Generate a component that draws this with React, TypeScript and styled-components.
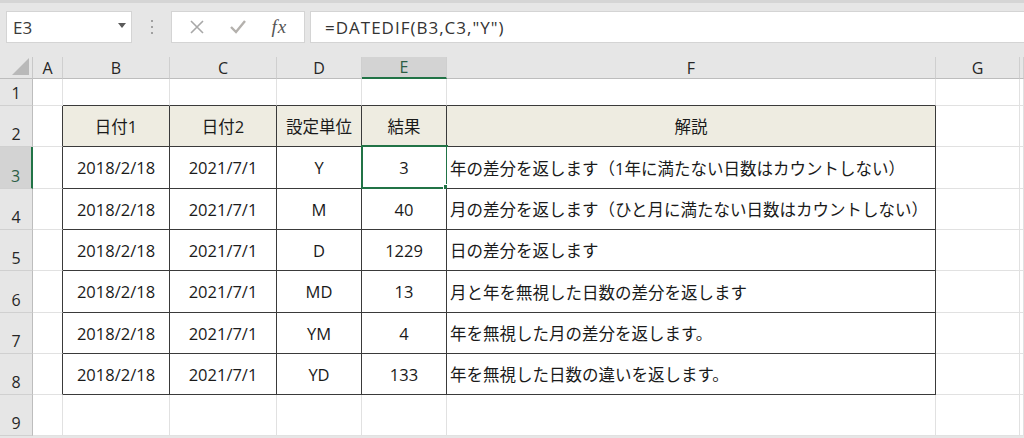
import React from 'react';
import {styled, createGlobalStyle} from "styled-components";

const GlobalStyle = createGlobalStyle`
    html, body {
        margin: 0;
        padding: 0;
        background-color: #e6e6e6;
    }
`;

const Window = styled.div`
    width: 1024px;
    height: 438px;
    overflow: hidden;
    background-color: #e6e6e6;
    font-family: "Open Sans", "Noto Sans CJK JP", sans-serif;
`;

const Toolbar = styled.div`
    height: 57px;
    box-sizing: border-box;
    border-top: 3px solid #d5d5d5;
    padding: 8px 0 0 6px;
    display: flex;
    align-items: flex-start;
`;

const NameBox = styled.div`
    width: 126px;
    height: 32px;
    box-sizing: border-box;
    background-color: #ffffff;
    border: 1px solid #d4d4d4;
    display: flex;
    align-items: center;
    justify-content: space-between;
    padding: 0 5px 0 6px;
    font-size: 17px;
    color: #3a3a3a;
`;

const Caret = styled.span`
    width: 0;
    height: 0;
    border-left: 4px solid transparent;
    border-right: 4px solid transparent;
    border-top: 5px solid #5a5a5a;
    margin-bottom: 3px;
`;

const Grip = styled.div`
    width: 39px;
    height: 32px;
    display: flex;
    flex-direction: column;
    align-items: center;
    justify-content: center;
    gap: 4px;
`;

const GripDot = styled.span`
    width: 2px;
    height: 2px;
    background-color: #a0a0a0;
`;

const FxBox = styled.div`
    width: 134px;
    height: 32px;
    box-sizing: border-box;
    background-color: #ffffff;
    border: 1px solid #d4d4d4;
    display: flex;
    align-items: center;
    justify-content: space-around;
    padding: 0 4px;
`;

const ToolIcon = styled.span`
    width: 30px;
    display: flex;
    justify-content: center;
    align-items: center;
`;

const FxText = styled.span`
    font-family: "Liberation Serif", serif;
    font-style: italic;
    font-size: 19px;
    color: #555555;
    letter-spacing: 1px;
`;

const FormulaBox = styled.div`
    flex: 1;
    height: 32px;
    margin-left: 5px;
    box-sizing: border-box;
    background-color: #ffffff;
    border: 1px solid #d4d4d4;
    border-right: none;
    display: flex;
    align-items: center;
    padding-left: 14px;
    font-size: 17px;
    letter-spacing: 1px;
    color: #333333;
`;

const Sheet = styled.div`
    display: grid;
    grid-template-columns: 33px 30px 107px 107px 85px 85px 489px 84px 4px;
    grid-template-rows: 22px 27px 41px 42px 41px 41px 42px 41px 41px 41px;
    background-color: #ffffff;
`;

const HeadBase = styled.div`
    box-sizing: border-box;
    background-color: #e6e6e6;
    display: flex;
    justify-content: center;
    font-family: "Open Sans", "Noto Sans", sans-serif;
    font-size: 16px;
`;

const Corner = styled(HeadBase)`
    position: relative;
    border-right: 1px solid #c8c8c8;
    border-bottom: 1px solid #bdbdbd;
`;

const CornerTriangle = styled.span`
    position: absolute;
    right: 3px;
    bottom: 3px;
    width: 0;
    height: 0;
    border-left: 17px solid transparent;
    border-bottom: 17px solid #b9b9b9;
`;

const ColHead = styled(HeadBase)<{ $active?: boolean }>`
    align-items: center;
    background-color: ${(p) => (p.$active ? "#d3d3d3" : "#e6e6e6")};
    color: ${(p) => (p.$active ? "#2c5e45" : "#262626")};
    border-right: 1px solid #cfcfcf;
    border-bottom: ${(p) => (p.$active ? "2px solid #217346" : "1px solid #bdbdbd")};
`;

const RowHead = styled(HeadBase)<{ $active?: boolean }>`
    align-items: flex-end;
    padding-bottom: 1px;
    background-color: ${(p) => (p.$active ? "#d3d3d3" : "#e6e6e6")};
    color: ${(p) => (p.$active ? "#2c5e45" : "#262626")};
    border-right: ${(p) => (p.$active ? "2px solid #217346" : "1px solid #bdbdbd")};
    border-bottom: 1px solid #d0d0d0;
`;

interface cellProps {
    $fill?: string
    $left?: boolean
    $darkRight?: boolean
    $darkBottom?: boolean
}

const Cell = styled.div<cellProps>`
    position: relative;
    box-sizing: border-box;
    display: flex;
    align-items: center;
    justify-content: ${(p) => (p.$left ? "flex-start" : "center")};
    padding-left: ${(p) => (p.$left ? "3px" : "0")};
    background-color: ${(p) => p.$fill || "#ffffff"};
    border-right: 1px solid ${(p) => (p.$darkRight ? "#3a3a3a" : "#e1e1e1")};
    border-bottom: 1px solid ${(p) => (p.$darkBottom ? "#3a3a3a" : "#e1e1e1")};
    font-size: 16.5px;
    color: #1a1a1a;
    white-space: nowrap;
`;

const Selection = styled.span`
    position: absolute;
    left: -1px;
    top: -2px;
    right: -2px;
    bottom: -1px;
    border: 2px solid #217346;
    pointer-events: none;

    &::after {
        content: "";
        position: absolute;
        right: -4px;
        bottom: -4px;
        width: 5px;
        height: 5px;
        background-color: #217346;
        border: 1px solid #ffffff;
    }
`;

const columns = ["A", "B", "C", "D", "E", "F", "G", ""];

const header = ["日付1", "日付2", "設定単位", "結果", "解説"];

const rows = [
    ["2018/2/18", "2021/7/1", "Y", "3", "年の差分を返します（1年に満たない日数はカウントしない）"],
    ["2018/2/18", "2021/7/1", "M", "40", "月の差分を返します（ひと月に満たない日数はカウントしない）"],
    ["2018/2/18", "2021/7/1", "D", "1229", "日の差分を返します"],
    ["2018/2/18", "2021/7/1", "MD", "13", "月と年を無視した日数の差分を返します"],
    ["2018/2/18", "2021/7/1", "YM", "4", "年を無視した月の差分を返します。"],
    ["2018/2/18", "2021/7/1", "YD", "133", "年を無視した日数の違いを返します。"],
];

const CrossIcon = () => (
    <svg width="16" height="16" viewBox="0 0 16 16">
        <path d="M2 2 L14 14 M14 2 L2 14" stroke="#a8a8a8" strokeWidth="1.6" fill="none"/>
    </svg>
);

const CheckIcon = () => (
    <svg width="18" height="16" viewBox="0 0 18 16">
        <path d="M2 8 L7 13 L16 2" stroke="#b4b1ad" strokeWidth="2.4" fill="none"/>
    </svg>
);

const App = () => {
    // table occupies B2:F8 (grid rows 2..8)
    const renderRow = (r: number) => {
        const cells: React.ReactNode[] = [];
        const inTable = r >= 2 && r <= 8;
        cells.push(<RowHead key={`h${r}`} $active={r === 3}>{r}</RowHead>);
        for (let c = 0; c < 8; c++) {
            const key = `${r}-${c}`;
            const tableCol = c >= 1 && c <= 5;
            if (inTable && tableCol) {
                const isHead = r === 2;
                const value = isHead ? header[c - 1] : rows[r - 3][c - 1];
                const isDesc = c === 5;
                cells.push(
                    <Cell key={key}
                          $fill={isHead ? "#eeece1" : undefined}
                          $left={isDesc && !isHead}
                          $darkRight
                          $darkBottom>
                        {value}
                        {r === 3 && c === 4 && <Selection/>}
                    </Cell>
                );
            } else {
                cells.push(
                    <Cell key={key}
                          $darkRight={c === 0 && inTable}
                          $darkBottom={r === 1 && tableCol}/>
                );
            }
        }
        return cells;
    };

    return (
        <Window>
            <GlobalStyle/>
            <Toolbar>
                <NameBox>E3<Caret/></NameBox>
                <Grip><GripDot/><GripDot/><GripDot/></Grip>
                <FxBox>
                    <ToolIcon><CrossIcon/></ToolIcon>
                    <ToolIcon><CheckIcon/></ToolIcon>
                    <ToolIcon><FxText>fx</FxText></ToolIcon>
                </FxBox>
                <FormulaBox>=DATEDIF(B3,C3,"Y")</FormulaBox>
            </Toolbar>
            <Sheet>
                <Corner><CornerTriangle/></Corner>
                {columns.map((col, i) => (
                    <ColHead key={`c${i}`} $active={col === "E"}>{col}</ColHead>
                ))}
                {Array.from({length: 9}, (_, i) => renderRow(i + 1))}
            </Sheet>
        </Window>
    );
};

export default App;
